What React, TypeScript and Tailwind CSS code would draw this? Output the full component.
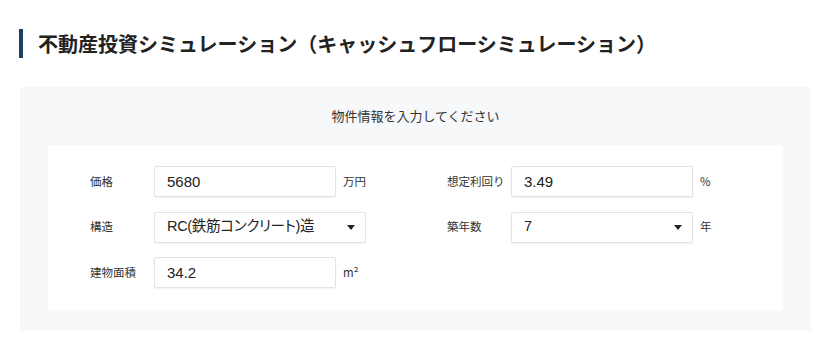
import React from 'react'

const FONT = { fontFamily: "'Noto Sans CJK JP', 'Noto Sans', sans-serif" }
const INPUT_FONT = { fontFamily: "'Liberation Sans', 'Noto Sans CJK JP', sans-serif", fontFeatureSettings: '"palt"' }

const boxClass =
  'h-[31px] bg-white border border-[#e3e3e3] rounded-[2px] shadow-[0_1px_2px_rgba(0,0,0,0.06)] px-3 text-[#222] outline-none'

function Caret() {
  return (
    <svg width="8" height="5" viewBox="0 0 8 5" className="shrink-0">
      <path d="M0 0 H8 L4 5 Z" fill="#222" />
    </svg>
  )
}

function Field({
  label,
  value,
  unit,
  select,
  wide,
}: {
  label: string
  value: string
  unit?: string
  select?: boolean
  wide?: boolean
}) {
  return (
    <div className="flex items-center h-[31px]">
      <span className="w-[64px] shrink-0 text-[11.5px] text-[#333]">{label}</span>
      {select ? (
        <div
          className={boxClass + ' flex items-center justify-between pr-[10px] text-[14.5px] tracking-[-0.3px] ' + (wide ? 'w-[212px]' : 'w-[182px]')}
          style={INPUT_FONT}
        >
          <span>{value}</span>
          <Caret />
        </div>
      ) : (
        <input className={boxClass + ' w-[182px] text-[15px]'} style={INPUT_FONT} defaultValue={value} readOnly />
      )}
      {unit && <span className="ml-[7px] text-[11.5px] text-[#333]">{unit}</span>}
    </div>
  )
}

export default function App() {
  return (
    <div className="w-[830px] h-[346px] bg-white" style={FONT}>
      <div className="pt-[29px] pl-[19px]">
        <h1 className="border-l-4 border-[#1b3e63] pl-[15px] h-[29px] flex items-center text-[20px] font-bold text-[#222] leading-none">
          不動産投資シミュレーション（キャッシュフローシミュレーション）
        </h1>
      </div>

      <div className="mt-[29px] mx-[20px] w-[791px] bg-[#f7f8fa] pt-[20px] pb-[21px] px-[28px]">
        <p className="text-center text-[13px] leading-[18px] text-[#333] mb-[20px]">物件情報を入力してください</p>
        <div className="bg-white pt-[21px] pb-[22px] pl-[42px]">
          <div className="grid grid-cols-[357px_auto] gap-y-[14.5px]">
            <Field label="価格" value="5680" unit="万円" />
            <Field label="想定利回り" value="3.49" unit="%" />
            <Field label="構造" value="RC(鉄筋コンクリート)造" select wide />
            <Field label="築年数" value="7" unit="年" select />
            <Field label="建物面積" value="34.2" unit="m²" />
          </div>
        </div>
      </div>
    </div>
  )
}
